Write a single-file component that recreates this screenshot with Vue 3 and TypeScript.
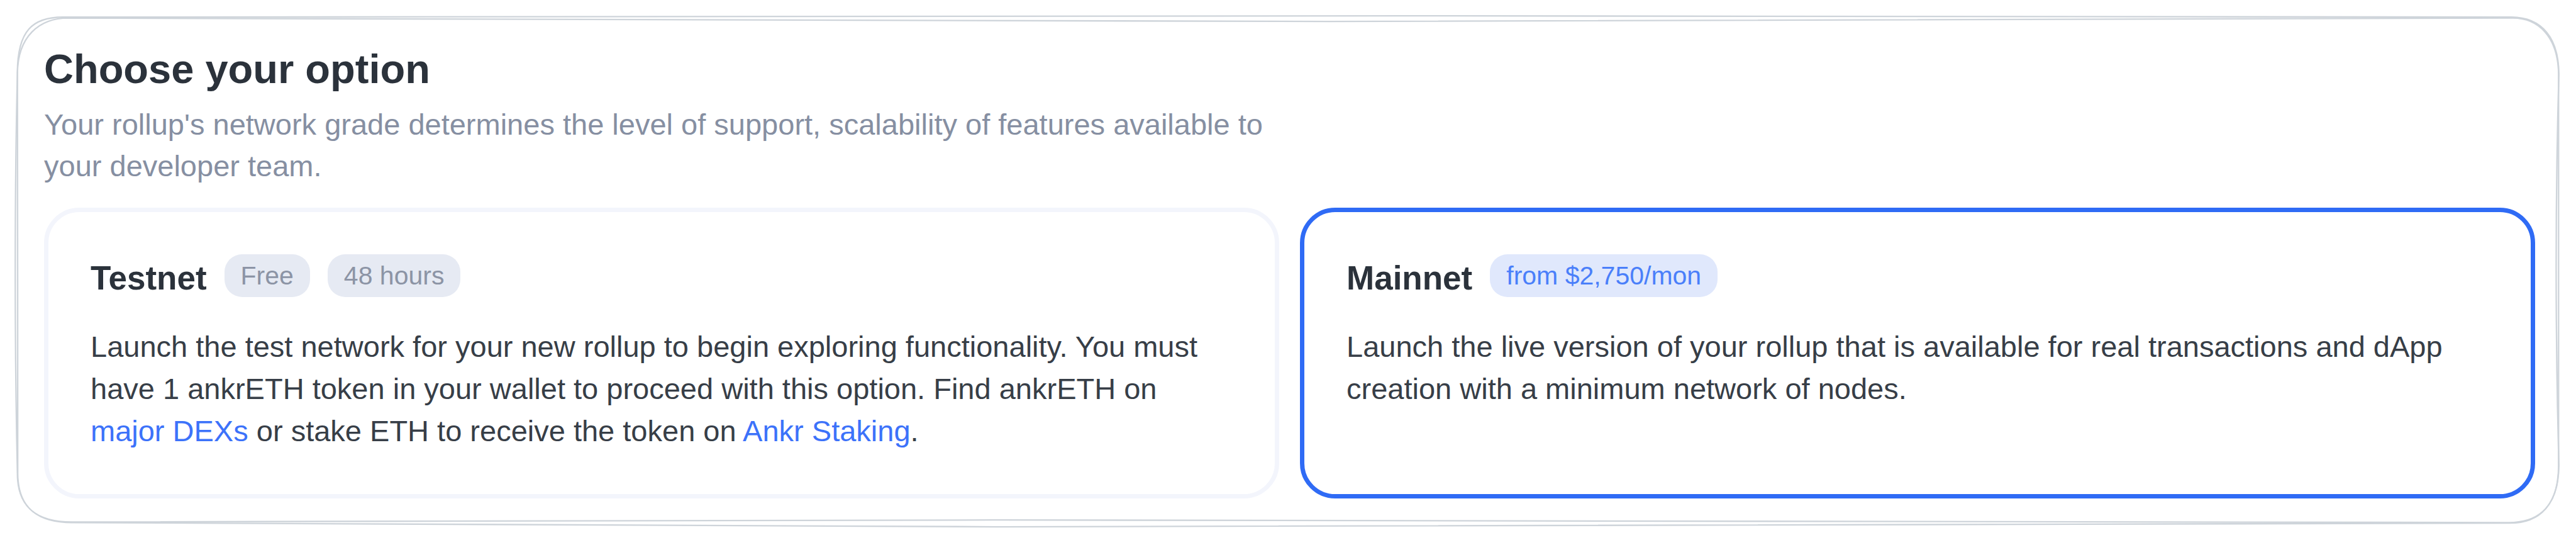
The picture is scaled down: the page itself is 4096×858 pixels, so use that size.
<script setup lang="ts">
import { ref } from 'vue'

interface TextPart {
  text: string
  href?: string
}

interface NetworkOption {
  id: string
  name: string
  badges: string[]
  description: TextPart[]
}

const options: NetworkOption[] = [
  {
    id: 'testnet',
    name: 'Testnet',
    badges: ['Free', '48 hours'],
    description: [
      {
        text: 'Launch the test network for your new rollup to begin exploring functionality. You must have 1 ankrETH token in your wallet to proceed with this option. Find ankrETH on ',
      },
      { text: 'major DEXs', href: '#dexs' },
      { text: ' or stake ETH to receive the token on ' },
      { text: 'Ankr Staking', href: '#staking' },
      { text: '.' },
    ],
  },
  {
    id: 'mainnet',
    name: 'Mainnet',
    badges: ['from $2,750/mon'],
    description: [
      {
        text: 'Launch the live version of your rollup that is available for real transactions and dApp creation with a minimum network of nodes.',
      },
    ],
  },
]

const selected = ref('mainnet')
</script>

<template>
  <main class="panel">
    <!-- Hand-drawn outline: two loose strokes round the panel -->
    <svg class="outline" viewBox="0 0 4434 929" preserveAspectRatio="none" aria-hidden="true">
      <path
        d="M108 29.500 C1100 27 3100 26 4323 29.500 C4376 30 4404 66 4404.500 127 C4399 320 4398 560 4404.500 801 C4404 864 4376 899 4318 899 C3100 893 1500 893 124 898 C62 898 30 872 30 815 C25 600 25 330 30 125 C30 52 57 29.500 108 29.500"
      />
      <path
        d="M118 31 C1300 39 3100 39 4325 31 C4370 31 4403 64 4404 127 C4403 320 4403 560 4404 801 C4404 868 4372 900 4320 900 C3100 910 1500 909 124 899 C62 899 31 872 30.500 815 C30 600 31 330 30 125 C31 64 66 31 118 31"
      />
    </svg>

    <header class="intro">
      <h1 class="title">Choose your option</h1>
      <p class="subtitle">
        Your rollup's network grade determines the level of support, scalability of features
        available to your developer team.
      </p>
    </header>

    <section class="options" aria-label="Network options">
      <article
        v-for="option in options"
        :key="option.id"
        class="card"
        :class="{ selected: option.id === selected }"
        @click="selected = option.id"
      >
        <div class="card-head">
          <h2 class="card-title">{{ option.name }}</h2>
          <span v-for="badge in option.badges" :key="badge" class="badge">{{ badge }}</span>
        </div>
        <p class="description">
          <template v-for="(part, i) in option.description" :key="i"
            ><a v-if="part.href" class="link" :href="part.href">{{ part.text }}</a
            ><template v-else>{{ part.text }}</template></template
          >
        </p>
      </article>
    </section>
  </main>
</template>

<style>
body {
  margin: 0;
  background: #ffffff;
}
</style>

<style scoped>
.panel {
  position: relative;
  box-sizing: border-box;
  min-height: 100vh;
  padding: 71px 65px 64px 70px;
  font-family: 'Liberation Sans', Arial, Helvetica, sans-serif;
  color: #2b323b;
}

.outline {
  position: absolute;
  inset: 0;
  width: 100%;
  height: 100%;
  fill: none;
  stroke: #ced4da;
  stroke-width: 2.5;
  pointer-events: none;
}

.title {
  margin: 0 0 16px;
  font-size: 65px;
  line-height: 78px;
  font-weight: 700;
}

.subtitle {
  margin: 0;
  max-width: 50%;
  font-size: 47px;
  line-height: 66px;
  color: #868fa2;
}

.options {
  display: grid;
  grid-template-columns: 1fr 1fr;
  gap: 33px;
  margin-top: 33px;
}

.card {
  padding: 67px;
  border: 7px solid #f3f5fc;
  border-radius: 56px;
}

.card.selected {
  border-color: #2f6bf5;
}

.card-head {
  display: flex;
  align-items: flex-start;
  gap: 28px;
  margin-bottom: 38px;
}

.card-title {
  margin: 0;
  font-size: 53px;
  line-height: 75px;
  font-weight: 700;
}

.badge {
  padding: 0 26px;
  border-radius: 28px;
  background: #e6eaf3;
  font-size: 41px;
  line-height: 68px;
  color: #8c94a5;
  white-space: nowrap;
}

.selected .badge {
  background: #e0e8fc;
  color: #4a7ffa;
}

.description {
  margin: 0;
  font-size: 47px;
  line-height: 67px;
  color: #373e47;
}

.link {
  color: #3c72fa;
  text-decoration: none;
}
</style>
